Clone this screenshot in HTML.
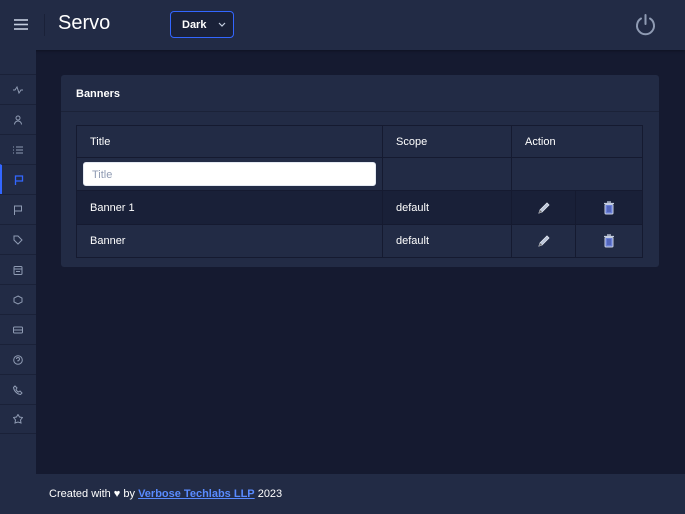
<!DOCTYPE html>
<html><head><style>
*{box-sizing:border-box;margin:0;padding:0}
body{width:685px;height:514px;background:#151a30;font-family:"Liberation Sans",sans-serif;color:#fff;position:relative;overflow:hidden;font-size:11px}
.hdr{position:absolute;left:0;top:0;width:685px;height:50px;background:#222b45;box-shadow:0 1px 3px rgba(0,0,0,.3)}
.side{position:absolute;left:0;top:50px;width:36px;height:464px;background:#222b45}
.item{position:absolute;left:0;width:36px;height:30px;border-top:1px solid #1a2138;display:flex;align-items:center;justify-content:center}
.foot{position:absolute;left:36px;top:474px;width:649px;height:40px;background:#222b45;padding:14px 13px;font-size:11px}
.foot a{color:#598bff;font-weight:bold;text-decoration:underline}
.card{position:absolute;left:61px;top:75px;width:598px;height:192px;background:#222b45;border-radius:3px}
.ch{height:37px;border-bottom:1px solid #1b2238;padding:13px 15px;font-weight:bold;font-size:11px}
table{position:absolute;left:15px;top:50px;width:567px;border-collapse:collapse}
td{border:1px solid #151a30;font-size:11px;padding:0 13px}
td svg{display:block;margin:0 auto}
</style></head><body>
<div class="hdr">
<svg style="position:absolute;left:13px;top:18px" width="16" height="13"><g stroke="#c5cee0" stroke-width="1.6"><line x1="1" y1="2" x2="15" y2="2"/><line x1="1" y1="6.5" x2="15" y2="6.5"/><line x1="1" y1="11" x2="15" y2="11"/></g></svg>
<div style="position:absolute;left:44px;top:14px;width:1px;height:22px;background:#1a2138"></div>
<div style="position:absolute;left:58px;top:12px;font-size:20px">Servo</div>
<div style="position:absolute;left:170px;top:11px;width:64px;height:27px;border:1px solid #3366ff;border-radius:4px;background:#1a2138;font-weight:bold;font-size:11px;padding:7px 11px">Dark<svg style="position:absolute;left:47px;top:10px" width="8" height="6"><path d="M1 1l3 3 3-3" stroke="#c5cee0" fill="none" stroke-width="1.2"/></svg></div>
<svg style="position:absolute;left:634px;top:13px" width="23" height="23" viewBox="0 0 23 23"><path d="M7 5.5A8.5 8.5 0 1 0 16 5.5" stroke="#8f9bb3" stroke-width="2" fill="none" stroke-linecap="round"/><line x1="11.5" y1="2" x2="11.5" y2="11" stroke="#8f9bb3" stroke-width="2" stroke-linecap="round"/></svg>
</div>
<div class="side">
<div class="item" style="top:24px"><svg width="10" height="10"><path d="M0 5h2l2-3 2 6 2-3h2" stroke="#8f9bb3" fill="none"/></svg></div>
<div class="item" style="top:54px"><svg width="10" height="10"><circle cx="5" cy="3" r="2" stroke="#8f9bb3" fill="none"/><path d="M1.5 9.5a3.5 3.5 0 0 1 7 0" stroke="#8f9bb3" fill="none"/></svg></div>
<div class="item" style="top:84px"><svg width="10" height="10"><path d="M0 2h1M3 2h7M0 5h1M3 5h7M0 8h1M3 8h7" stroke="#8f9bb3"/></svg></div>
<div class="item" style="top:114px;border-left:2px solid #3366ff"><svg width="10" height="10"><path d="M1.5 10V1h7v5h-7" stroke="#3366ff" fill="none" stroke-width="1.3"/></svg></div>
<div class="item" style="top:144px"><svg width="10" height="10"><path d="M1.5 10V1h7v5h-7" stroke="#8f9bb3" fill="none"/></svg></div>
<div class="item" style="top:174px"><svg width="10" height="10"><path d="M1 1h4l4 4-4 4-4-4z" stroke="#8f9bb3" fill="none"/></svg></div>
<div class="item" style="top:204px"><svg width="10" height="10"><rect x="1" y="1.5" width="8" height="8" rx="1" stroke="#8f9bb3" fill="none"/><path d="M1 4h8M3 6.5h4" stroke="#8f9bb3"/></svg></div>
<div class="item" style="top:234px"><svg width="10" height="10"><path d="M5 1l4 2v4l-4 2-4-2V3z" stroke="#8f9bb3" fill="none"/></svg></div>
<div class="item" style="top:264px"><svg width="10" height="10"><rect x="0.5" y="2" width="9" height="6" rx="1" stroke="#8f9bb3" fill="none"/><path d="M1 5h8" stroke="#8f9bb3"/></svg></div>
<div class="item" style="top:294px"><svg width="10" height="10"><circle cx="5" cy="5" r="4.3" stroke="#8f9bb3" fill="none"/><path d="M3.5 4a1.5 1.5 0 1 1 1.5 1.5v1" stroke="#8f9bb3" fill="none"/></svg></div>
<div class="item" style="top:324px"><svg width="10" height="10"><path d="M2 1l2 2-1 1.5a5 5 0 0 0 2.5 2.5L7 6l2 2-1.5 1.5C4 9 1 6 .5 2.5z" stroke="#8f9bb3" fill="none"/></svg></div>
<div class="item" style="top:354px;border-bottom:1px solid #1a2138"><svg width="10" height="10"><path d="M5 .5l1.5 2.5 3 .5-2 2.5.5 3L5 8 2 9l.5-3-2-2.5 3-.5z" stroke="#8f9bb3" fill="none"/></svg></div>
</div>
<div class="card">
<div class="ch">Banners</div>
<table>
<tr style="height:32px;background:#222b45"><td style="width:306px">Title</td><td style="width:129px">Scope</td><td colspan="2">Action</td></tr>
<tr style="height:33px"><td style="padding:0 6px"><div style="background:#fff;border-radius:3px;height:24px;color:#8f9bb3;padding:6px 8px;font-size:11px;border:1px solid #e4e9f2">Title</div></td><td></td><td colspan="2"></td></tr>
<tr style="height:34px;background:#192038"><td>Banner 1</td><td>default</td><td style="width:64px"><svg width="14" height="14" viewBox="0 0 14 14"><path d="M2 12l1-3 7-7 2 2-7 7z" fill="#b8c2d6" stroke="#e4e9f2" stroke-width=".8"/><path d="M2 12l1-3 2 2z" fill="#666"/></svg></td><td><svg width="12" height="14" viewBox="0 0 12 14"><path d="M4 1h4M1 2.5h10" stroke="#c5cee0" stroke-width="1.2"/><rect x="2" y="3.5" width="8" height="9.5" rx="1" fill="#6a7fd6" stroke="#c5cee0"/><path d="M5 5v6M7 5v6" stroke="#3a4ba0"/></svg></td></tr>
<tr style="height:33px"><td>Banner</td><td>default</td><td><svg width="14" height="14" viewBox="0 0 14 14"><path d="M2 12l1-3 7-7 2 2-7 7z" fill="#b8c2d6" stroke="#e4e9f2" stroke-width=".8"/><path d="M2 12l1-3 2 2z" fill="#666"/></svg></td><td><svg width="12" height="14" viewBox="0 0 12 14"><path d="M4 1h4M1 2.5h10" stroke="#c5cee0" stroke-width="1.2"/><rect x="2" y="3.5" width="8" height="9.5" rx="1" fill="#6a7fd6" stroke="#c5cee0"/><path d="M5 5v6M7 5v6" stroke="#3a4ba0"/></svg></td></tr>
</table>
</div>
<div class="foot">Created with ♥ by <a>Verbose Techlabs LLP</a> 2023</div>
</body></html>
